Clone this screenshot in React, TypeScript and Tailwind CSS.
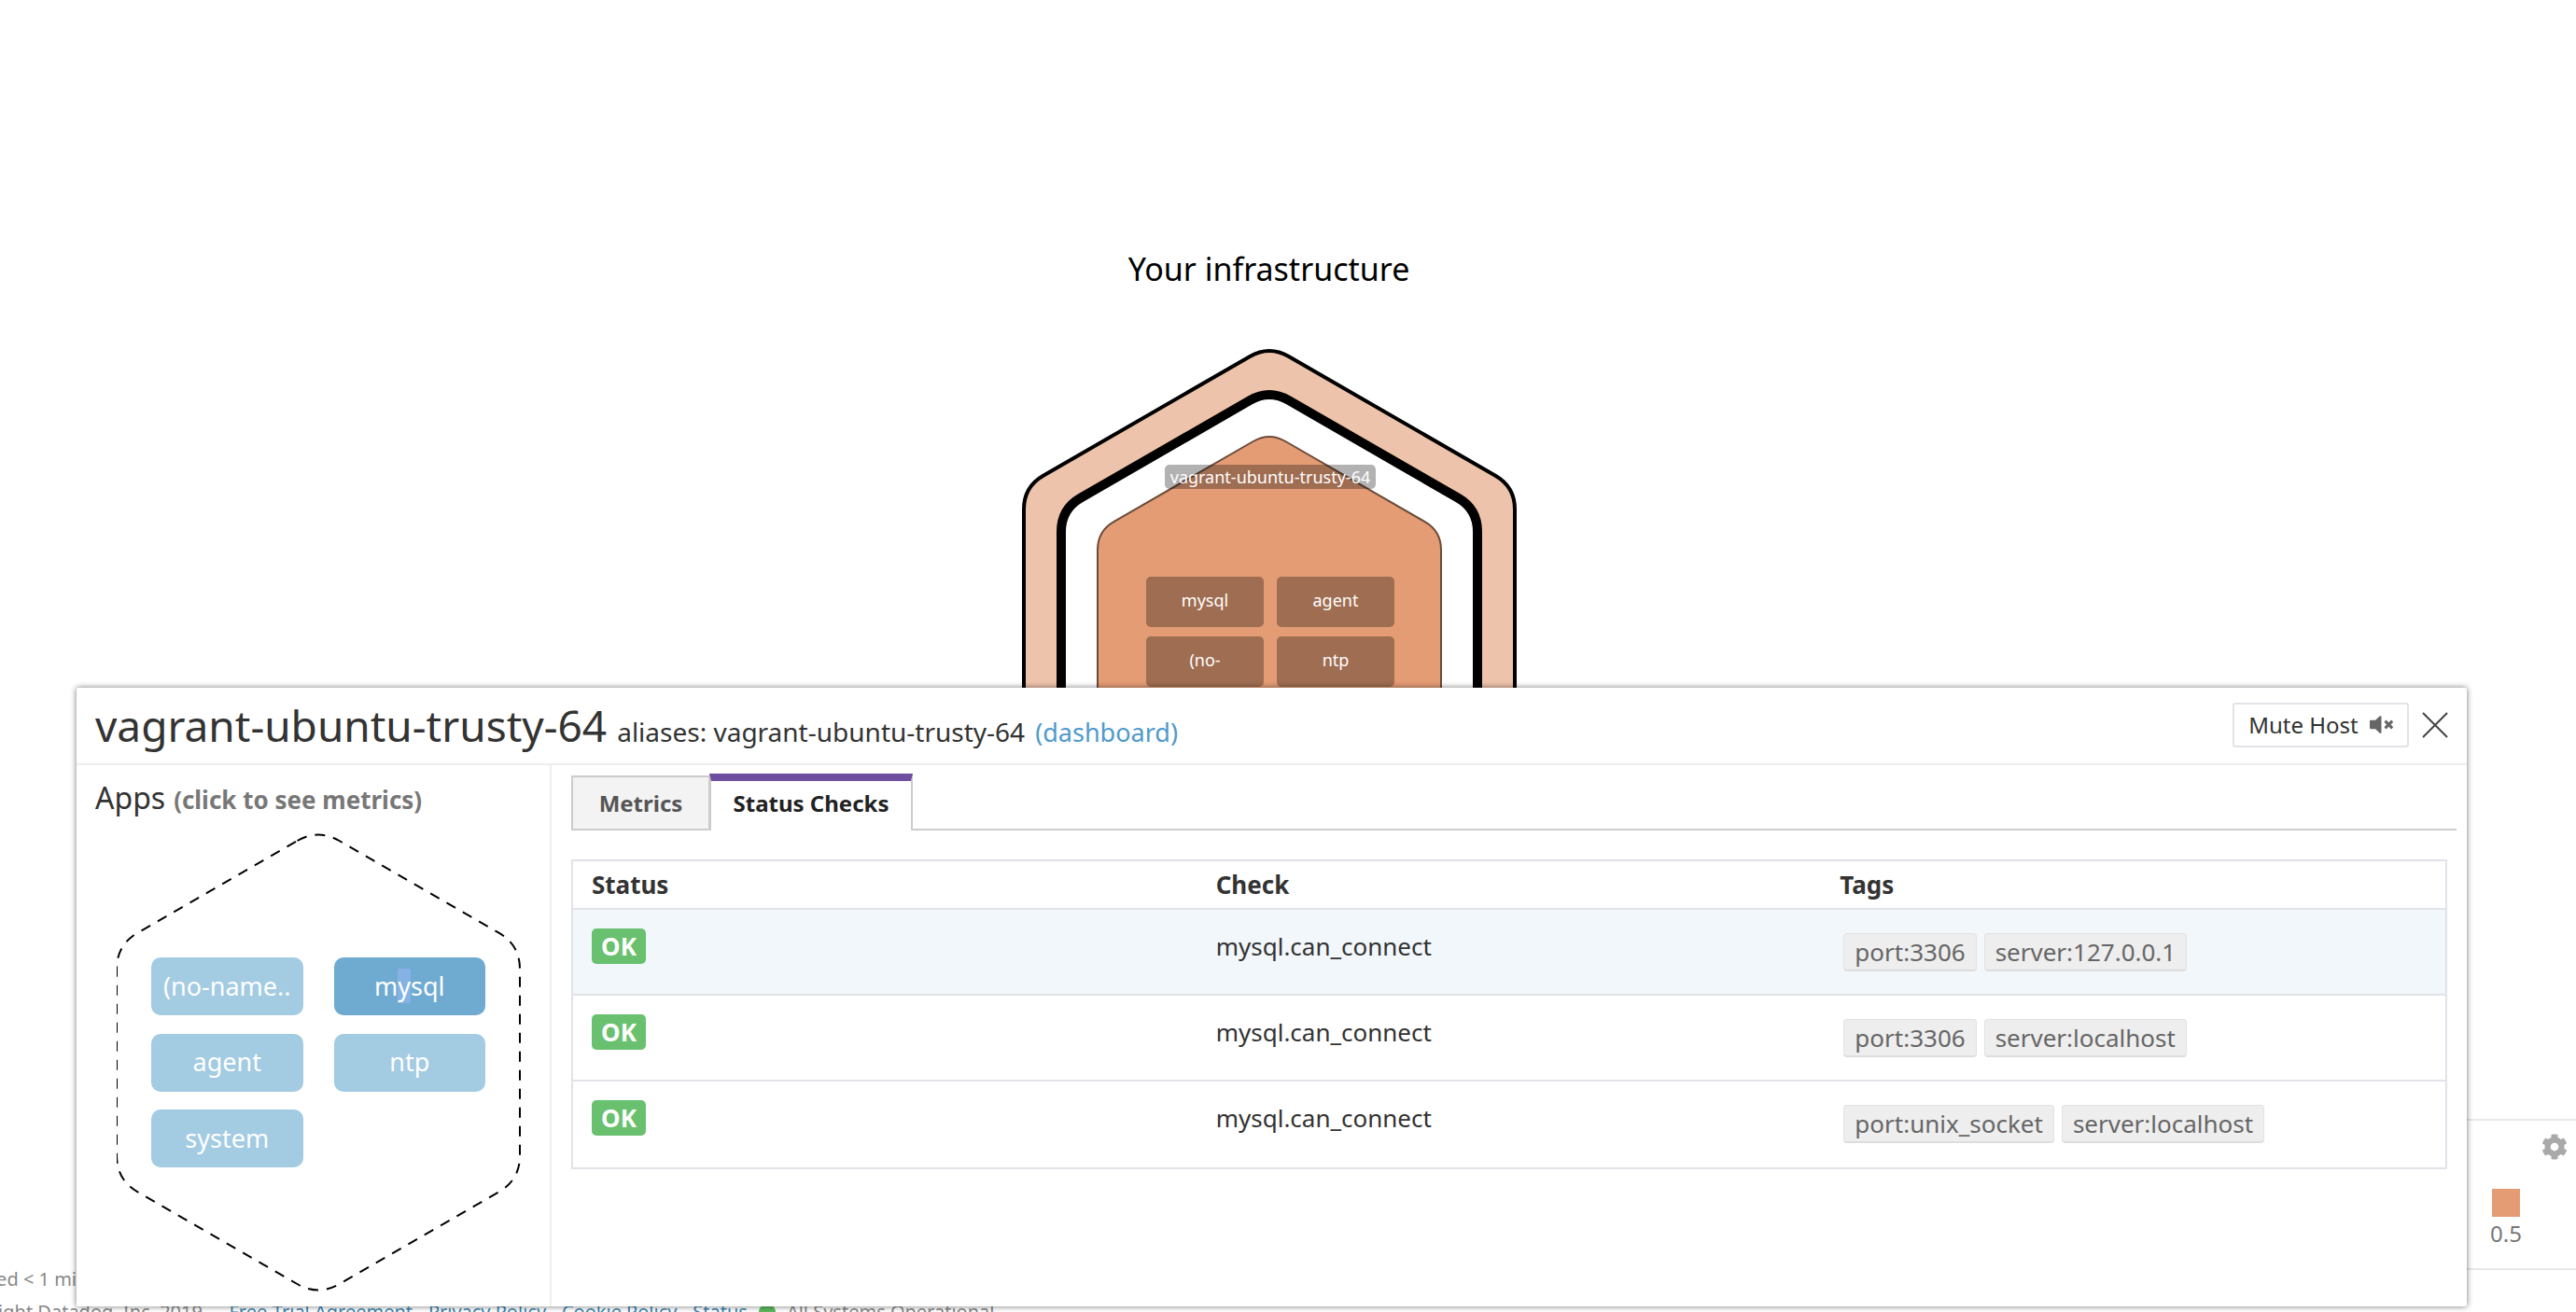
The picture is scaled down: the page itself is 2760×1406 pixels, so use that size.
import { FaCog, FaVolumeMute } from 'react-icons/fa';

// rounded pointy-top hexagon, used for the host map and the apps outline
const hexPath = (cx: number, top: number, bottom: number, w: number, r: number) => {
    const s = w * 0.577;
    const dx = r * 0.866;
    const dy = r * 0.5;
    return [
        `M${cx - dx} ${top + dy}`,
        `Q${cx} ${top} ${cx + dx} ${top + dy}`,
        `L${cx + w - dx} ${top + s - dy}`,
        `Q${cx + w} ${top + s} ${cx + w} ${top + s + r}`,
        `L${cx + w} ${bottom - s - r}`,
        `Q${cx + w} ${bottom - s} ${cx + w - dx} ${bottom - s + dy}`,
        `L${cx + dx} ${bottom - dy}`,
        `Q${cx} ${bottom} ${cx - dx} ${bottom - dy}`,
        `L${cx - w + dx} ${bottom - s + dy}`,
        `Q${cx - w} ${bottom - s} ${cx - w} ${bottom - s - r}`,
        `L${cx - w} ${top + s + r}`,
        `Q${cx - w} ${top + s} ${cx - w + dx} ${top + s - dy}`,
        'Z',
    ].join(' ');
};

const hostApps = [
    { name: 'mysql', x: 138, y: 248 },
    { name: 'agent', x: 278, y: 248 },
    { name: '(no-', x: 138, y: 312 },
    { name: 'ntp', x: 278, y: 312 },
];

const checks = [
    { tags: ['port:3306', 'server:127.0.0.1'], active: true },
    { tags: ['port:3306', 'server:localhost'], active: false },
    { tags: ['port:unix_socket', 'server:localhost'], active: false },
];

function HostMap() {
    return (
        <svg width="540" height="560" viewBox="0 0 540 560" className="mt-[62px] block">
            <path d={hexPath(270, 0, 800, 263, 24)} fill="#eec3ab" stroke="#000" strokeWidth="4" />
            <path d={hexPath(270, 47, 760, 223, 24)} fill="#fff" stroke="#000" strokeWidth="10" />
            <path d={hexPath(270, 93, 700, 184, 20)} fill="#e49c75" stroke="#6b4c3a" strokeWidth="2" />
            {hostApps.map((app) => (
                <g key={app.name}>
                    <rect x={app.x} y={app.y} width="126" height="54" rx="5" fill="#000" fillOpacity="0.3" />
                    <text x={app.x + 63} y={app.y + 32} textAnchor="middle" fontSize="18" fill="#fff">
                        {app.name}
                    </text>
                </g>
            ))}
            <rect x="158" y="128" width="226" height="26" rx="5" fill="#000" fillOpacity="0.3" />
            <text x="271" y="148" textAnchor="middle" fontSize="18" fill="#fff">
                vagrant-ubuntu-trusty-64
            </text>
        </svg>
    );
}

function AppBox({ children, active }: { children: React.ReactNode; active?: boolean }) {
    return (
        <div
            className={`h-[62px] rounded-[10px] flex items-center justify-center text-white text-[27px] ${
                active ? 'bg-[#6faad1]' : 'bg-[#a3cbe2]'
            }`}
        >
            {children}
        </div>
    );
}

function AppsPane() {
    return (
        <div className="w-[509px] shrink-0 border-r-2 border-[#eeeeee] pl-[20px]">
            <div className="mt-[11px] h-[44px] flex items-baseline text-[#333]">
                <span className="text-[32px]">Apps</span>
                <span className="ml-[9px] text-[26px] font-bold text-[#777]">(click to see metrics)</span>
            </div>
            <div className="relative ml-[23px] mt-[17px] w-[432px] h-[492px]">
                <svg width="436" height="500" viewBox="0 0 436 500" className="absolute left-0 top-0">
                    <path
                        d={hexPath(216, -4, 497, 216, 26)}
                        fill="none"
                        stroke="#000"
                        strokeWidth="2"
                        strokeDasharray="11 9"
                    />
                </svg>
                <div className="relative pt-[134px] pl-[37px] w-[395px] grid grid-cols-2 gap-x-[33px] gap-y-[19.5px]">
                    <AppBox>(no-name..</AppBox>
                    <AppBox active>
                        <span>
                            m<span className="bg-[#85b1e5]">y</span>sql
                        </span>
                    </AppBox>
                    <AppBox>agent</AppBox>
                    <AppBox>ntp</AppBox>
                    <AppBox>system</AppBox>
                </div>
            </div>
        </div>
    );
}

function ChecksPane() {
    return (
        <div className="flex-1 min-w-0 pl-[21px] pr-[11px]">
            {/* Tabs */}
            <div className="mt-[9px] h-[61px] flex items-end border-b-2 border-[#cccccc] -mb-px">
                <div className="h-[59px] w-[149px] -mb-[2px] bg-[#f3f3f3] border-2 border-[#cccccc] flex items-center justify-center text-[24px] font-bold text-[#555]">
                    Metrics
                </div>
                <div className="h-[61px] w-[218px] -ml-px -mb-[2px] pb-[6px] bg-white border-x-2 border-[#cccccc] border-t-[8px] border-t-[#6e4e9e] flex items-center justify-center text-[24px] font-bold text-[#222]">
                    Status Checks
                </div>
            </div>

            {/* Table */}
            <div className="mt-[32px] mr-[10px] border-2 border-[#e2e2e8]">
                <div className="h-[52px] grid grid-cols-3 items-center border-b-2 border-[#e2e2e8] text-[26px] font-bold text-[#333]">
                    <div className="pl-[20px]">Status</div>
                    <div className="pl-[20px]">Check</div>
                    <div className="pl-[20px]">Tags</div>
                </div>
                {checks.map((check, i) => (
                    <div
                        key={i}
                        className={`h-[92px] grid grid-cols-3 items-start ${
                            i < checks.length - 1 ? 'border-b-2 border-[#e2e2e8]' : ''
                        } ${check.active ? 'bg-[#f2f7fb]' : 'bg-white'}`}
                    >
                        <div className="pl-[20px] pt-[20px]">
                            <div className="w-[58px] h-[38px] rounded-[5px] bg-[#69c16f] flex items-center justify-center text-white text-[26px] font-bold">
                                OK
                            </div>
                        </div>
                        <div className="pl-[20px] pt-[21px] text-[26px] leading-[36px] text-[#333]">mysql.can_connect</div>
                        <div className="pl-[24px] pt-[25px] flex gap-[8px]">
                            {check.tags.map((tag) => (
                                <span
                                    key={tag}
                                    className="h-[41px] px-[11px] rounded-[4px] bg-[#eeeeee] border border-[#e2e2e2] border-b-2 border-b-[#dddddd] flex items-center text-[26px] text-[#666]"
                                >
                                    {tag}
                                </span>
                            ))}
                        </div>
                    </div>
                ))}
            </div>
        </div>
    );
}

function HostModal() {
    return (
        <div className="absolute left-[82px] top-[737px] w-[2561px] h-[663px] bg-white rounded-[2px] shadow-[0_0_6px_rgba(0,0,0,0.55)] flex flex-col">
            <div className="h-[83px] shrink-0 border-b-2 border-[#eeeeee] pl-[20px] pr-[20px] flex items-center justify-between">
                <div className="flex items-baseline text-[#333]">
                    <span className="text-[46px]">vagrant-ubuntu-trusty-64</span>
                    <span className="ml-[11px] text-[28px]">aliases: vagrant-ubuntu-trusty-64</span>
                    <span className="ml-[11px] text-[27px] text-[#4f9acb]">(dashboard)</span>
                </div>
                <div className="flex items-center -mt-[2px]">
                    <div className="w-[189px] h-[48px] border-2 border-[#e3e3e8] rounded-[3px] flex items-center justify-center gap-[12px] text-[24px] text-[#333]">
                        <span>Mute Host</span>
                        <FaVolumeMute className="w-[25px] h-[25px] text-[#666]" />
                    </div>
                    <svg width="28" height="28" viewBox="0 0 28 28" className="ml-[14px]" fill="none" stroke="#444" strokeWidth="2">
                        <path d="M1 1 L27 27 M27 1 L1 27" />
                    </svg>
                </div>
            </div>
            <div className="flex-1 min-h-0 flex">
                <AppsPane />
                <ChecksPane />
            </div>
        </div>
    );
}

export default function App() {
    return (
        <div className="relative h-[1406px] overflow-hidden bg-white font-['Noto_Sans',sans-serif]">
            <div className="h-[1199px] overflow-hidden pr-[41px] pt-[268px] flex flex-col items-center">
                <h1 className="text-[34px] leading-[40px] text-black">Your infrastructure</h1>
                <HostMap />
            </div>

            {/* Legend behind the modal */}
            <div className="ml-auto w-[400px] h-[162px] border-y-2 border-[#e8e8e8] flex justify-end items-start pr-[9px]">
                <div className="mt-[73px] w-[30px] flex flex-col items-center">
                    <div className="w-[30px] h-[30px] shrink-0 bg-[#e49c75]" />
                    <span className="mt-[2px] text-[24px] leading-[32px] text-[#777]">0.5</span>
                </div>
                <FaCog className="ml-[23px] mt-[14px] w-[28px] h-[28px] text-[#a9a9a9]" />
            </div>

            {/* Footer, mostly under the modal */}
            <div className="-mt-[5px] text-[20px] text-[#888]">
                <div className="leading-[30px] mb-[5px] -ml-[103px]">Last updated &lt; 1 min ago</div>
                <div className="leading-[30px] -ml-[57px] flex items-center whitespace-nowrap">
                    Copyright Datadog, Inc. 2019 - -&nbsp;<span className="text-[#3e86b0]">Free-Trial Agreement</span>&nbsp;-&nbsp;
                    <span className="text-[#3e86b0]">Privacy Policy</span>&nbsp;-&nbsp;
                    <span className="text-[#3e86b0]">Cookie Policy</span>&nbsp;-&nbsp;
                    <span className="text-[#3e86b0]">Status</span>
                    <span className="mx-[12px] w-[18px] h-[18px] rounded-full bg-[#5cb85c]" />
                    All Systems Operational
                </div>
            </div>

            <HostModal />
        </div>
    );
}
